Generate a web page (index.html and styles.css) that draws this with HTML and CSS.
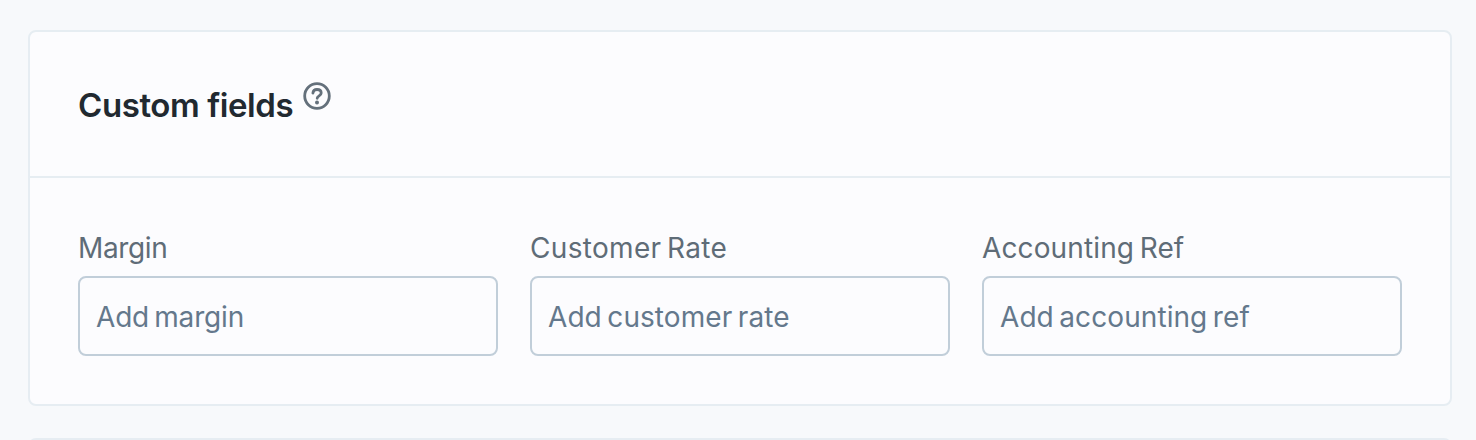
FILE: index.html
```html
<!DOCTYPE html>
<html lang="en">
<head>
  <meta charset="UTF-8">
  <meta name="viewport" content="width=device-width, initial-scale=1.0">
  <title>Custom fields</title>
  <link rel="stylesheet" href="styles.css">
</head>
<body>
<main class="page">
  <!-- Custom fields -->
  <section class="card">
    <div class="card-header">
      <h2 class="card-title">Custom fields</h2>
      <svg class="help-icon" viewBox="0 0 28 28" fill="none" stroke="currentColor" role="img" aria-label="Help">
        <circle cx="14" cy="14" r="12.3" stroke-width="2.8"/>
        <path d="M9.9 11.1C10.1 8.9 11.8 7.5 14 7.5C16.4 7.5 18.2 8.9 18.2 11.1C18.2 14 14.2 13.8 14.2 16.3" stroke-width="2.8" stroke-linecap="round"/>
        <circle cx="14" cy="20.6" r="2" fill="currentColor" stroke="none"/>
      </svg>
    </div>

    <div class="card-body">
      <div class="field">
        <label class="field-label label-margin" for="margin">Margin</label>
        <input type="text" class="field-input input-margin" id="margin" placeholder="Add margin">
      </div>
      <div class="field">
        <label class="field-label label-rate" for="customerRate">Customer Rate</label>
        <input type="text" class="field-input" id="customerRate" placeholder="Add customer rate">
      </div>
      <div class="field">
        <label class="field-label" for="accountingRef">Accounting Ref</label>
        <input type="text" class="field-input" id="accountingRef" placeholder="Add accounting ref">
      </div>
    </div>
  </section>

  <!-- Next card -->
  <section class="card card-next"></section>
</main>
</body>
</html>
```

FILE: styles.css
```css
body, html {
  margin: 0;
  padding: 0;
  height: 100%;
  font-family: Inter, sans-serif;
  background: #f7f9fb;
}

.page {
  display: flex;
  flex-direction: column;
  gap: 32px;
  height: 100%;
  padding: 30px 24px 0 28px;
  box-sizing: border-box;
  overflow: hidden;
}

.card {
  flex-shrink: 0;
  background: #fcfcfe;
  border: 2px solid #e6edf2;
  border-radius: 8px;
}

.card-next {
  height: 20px;
}

.card-header {
  display: flex;
  align-items: flex-start;
  gap: 10px;
  height: 94px;
  padding: 50px 48px 0;
  border-bottom: 2px solid #e6edf2;
}

.card-title {
  margin: 0;
  font-size: 33px;
  line-height: 46px;
  font-weight: 600;
  letter-spacing: -0.42px;
  color: #212930;
}

.help-icon {
  width: 28px;
  height: 28px;
  color: #64707b;
}

.card-body {
  display: grid;
  grid-template-columns: repeat(3, 1fr);
  gap: 32px;
  padding: 50px 48px 48px;
}

.field {
  display: flex;
  flex-direction: column;
  gap: 8px;
}

.field-label {
  font-size: 28px;
  line-height: 40px;
  letter-spacing: 0.13px;
  word-spacing: -2.5px;
  color: #5f6c77;
}

.label-margin {
  letter-spacing: -0.35px;
}

.label-rate {
  letter-spacing: 0.32px;
}

.field-input {
  width: 100%;
  height: 80px;
  padding: 2px 16px 0;
  box-sizing: border-box;
  border: 2px solid #c1ced9;
  border-radius: 8px;
  background: transparent;
  font-family: inherit;
  font-size: 28px;
  letter-spacing: 0.08px;
  word-spacing: -2.5px;
  color: #212930;
  outline: none;
}

.input-margin {
  letter-spacing: -0.18px;
}

.field-input::placeholder {
  color: #64788c;
  opacity: 1;
}

.field-input:focus {
  border-color: #64788c;
}
```
